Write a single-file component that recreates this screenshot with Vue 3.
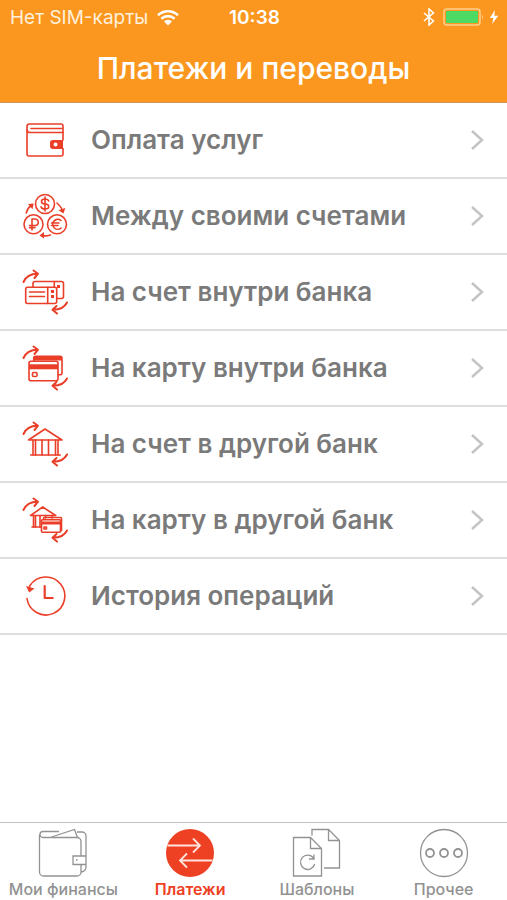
<template>
	<div class="screen">
		<header class="header">
			<div class="status">
				<div class="carrier">
					<span>Нет SIM-карты</span>
					<svg width="24" height="17" viewBox="0 0 24 17">
						<path d="M2 6.2a14.5 14.5 0 0 1 20 0M5.4 9.7a9.7 9.7 0 0 1 13.2 0" fill="none" stroke="#fff" stroke-width="2.6" />
						<path d="M8 12.4a5.8 5.8 0 0 1 8 0l-4 4z" fill="#fff" />
					</svg>
				</div>
				<time class="clock">10:38</time>
				<div class="power">
					<svg width="12" height="18" viewBox="0 0 12 18">
						<path d="M1 5l9.4 8L6 17V1l4.4 4L1 13" fill="none" stroke="#fff" stroke-width="1.6" />
					</svg>
					<svg width="42" height="18" viewBox="0 0 42 18">
						<rect x="1" y="1" width="36" height="16" rx="3" fill="none" stroke="#ffcf8f" stroke-width="1.5" />
						<rect x="3" y="3" width="32" height="12" rx="1" fill="#4cd964" />
						<path d="M39 6.500q2 2.500 0 5z" fill="#ffcf8f" />
					</svg>
					<svg width="10" height="16" viewBox="0 0 10 16">
						<path d="M6 1L.8 9H4.300L3.200 15 9.200 6.800H5.300z" fill="#fff" />
					</svg>
				</div>
			</div>
			<h1>Платежи и переводы</h1>
		</header>

		<main>
			<ul class="menu">
				<li v-for="item in items" :key="item.icon">
					<button class="item">
						<svg class="icon" viewBox="0 0 48 48">
							<g v-if="item.swap" class="swap">
								<path d="M2.500 14Q6 5.700 16.500 5.700M12.500 2.500L17 5.700 13.500 10" />
								<path d="M46 34.500Q42.500 41.700 32 41.700M35.500 38L31.500 41.700 36 45.500" />
							</g>

							<g v-if="item.icon === 'wallet'">
								<path d="M42 32.500V38a2 2 0 0 1-2 2H8a2 2 0 0 1-2-2V10.500A2.500 2.500 0 0 1 8.500 8H40a2 2 0 0 1 2 2v14" />
								<path d="M6 14Q6.500 16.500 9 16.500H42M10 12.500H41" />
								<path class="solid" fill-rule="evenodd" d="M32 24h10v9H32a3 3 0 0 1-3-3v-3a3 3 0 0 1 3-3zm2.500 2.500a2 2 0 1 0 .1 0z" />
							</g>

							<g v-else-if="item.icon === 'currency'">
								<circle cx="24" cy="12" r="9.500" />
								<circle cx="12.500" cy="32.300" r="9.500" />
								<circle cx="36" cy="32.300" r="9.500" />
								<path d="M27.700 9Q27 7 24 7q-3.500 0-3.500 2.500T24 12t3.700 2.500T24 17q-3.300 0-4-2.300M24 5v14" />
								<path d="M11 38V27h3a3.300 3.300 0 0 1 0 6.600H8.500M8.500 35.800H14" />
								<path d="M40 28.500a5 5 0 1 0 0 7.600M30.500 31H38M30.500 33.500H37" />
								<path d="M5.200 21Q6.500 16 10.500 13" />
								<path d="M36 11Q40 14.500 41.700 18.500" />
								<path d="M29.500 43Q25 44.500 21 43.500" />
								<path class="solid" d="M7 12l5.700-.5-1.200 5.700zM37.500 18.200l5 3.300 1.800-5.500zM23 40l-4.500 3.500 4.500 3z" />
							</g>

							<g v-else-if="item.icon === 'account'">
								<path d="M12 19v-3.500a2 2 0 0 1 2-2h26.500a2 2 0 0 1 2 2v13a2 2 0 0 1-2 2H36M33.300 13.500V19" />
								<rect x="4.700" y="19.300" width="31" height="16.200" rx="2" />
								<path d="M26.700 19.300v16.200M8.500 24h15M8.500 28.500h15" />
								<path class="solid" d="M30 22h3v3h-3zM30 27h3v3h-3zM36 17h3v3h-3z" />
							</g>

							<g v-else-if="item.icon === 'card'">
								<path d="M12.700 17v-2.700a2 2 0 0 1 2-2H39a2 2 0 0 1 2 2v14.400a2 2 0 0 1-2 2h-2" />
								<path class="solid" d="M13 13h28v3.500H13z" />
								<rect x="8" y="17.300" width="29" height="19.400" rx="2" />
								<path class="solid" d="M8 20.300h29v5H8z" />
								<rect x="11.500" y="28.500" width="4.500" height="4" rx="1" />
							</g>

							<g v-else-if="item.icon === 'bank'">
								<path d="M7.500 20L24 9l17 11zM9.700 35h29.600" />
								<path d="M12 20v15M14.500 20v15M21 20v15M27.500 20v15M34.500 20v15M37 20v15" />
							</g>

							<g v-else-if="item.icon === 'bank-card'">
								<path d="M9.500 19.500L21.700 11l13 8.500zM11 31h9" />
								<path d="M12.500 20v11M14.500 20v11M19 20v11M24.500 20v2M31 20v2" />
								<path d="M22.500 23.500v-1a1 1 0 0 1 1-1h16a1 1 0 0 1 1 1v12" />
								<rect x="20.500" y="23.700" width="19" height="12.600" rx="1" />
								<path class="solid" d="M20.500 25.500h19v3h-19z" />
								<rect x="23" y="31" width="2.500" height="2" />
							</g>

							<g v-else>
								<path d="M6 26.500a19 19 0 1 0 3-13L8 16" />
								<path d="M23.700 14v12h8" class="hand" />
								<path class="solid" d="M5 14l8.500 2.500L8.200 20.500z" />
							</g>
						</svg>
						<span class="label">{{ item.label }}</span>
						<svg class="chevron" viewBox="0 0 14 22">
							<path d="M2 2l10 9-10 9" />
						</svg>
					</button>
				</li>
			</ul>
		</main>

		<nav class="tabs">
			<button v-for="tab in tabs" :key="tab.icon" class="tab" :class="{ active: active === tab.icon }" @click="active = tab.icon">
				<svg viewBox="0 0 50 50">
					<g v-if="tab.icon === 'finance'">
						<path d="M1.500 6.500v37.500a4 4 0 0 0 4 4H39a4 4 0 0 0 4-4v-7.500M43 28V13.500a4 4 0 0 0-4-4H5a3 3 0 0 1 0-6H21M39 4h5a4 4 0 0 1 4 4v31a5 5 0 0 1-5 5" />
						<path d="M13.500 9L36.500 1.500l3 8M48 28H35v8.500h13M38 32h1.500" />
					</g>
					<g v-else-if="tab.icon === 'payments'">
						<circle class="disc" cx="25" cy="25" r="24" />
						<path class="arrows" d="M2.500 17.500H35M28 10.500l7 7-7 7M47.500 32.500H15M22 25.500l-7 7 7 7" />
					</g>
					<g v-else-if="tab.icon === 'templates'">
						<path d="M1.500 9.500H18.500L29.500 20.500v27.500h-28zM18.500 9.500v11h11" />
						<path d="M20 7.500V1.500H36.500L47.500 12.500V40H32M36.500 1.500v11h11" />
						<path d="M21.500 30a7.200 7.200 0 1 0 1.200 6M22 26.500v4.500h-5" />
					</g>
					<g v-else>
						<circle cx="25" cy="25" r="23.500" />
						<circle class="dot" cx="11" cy="25" r="4" />
						<circle class="dot" cx="25" cy="25" r="4" />
						<circle class="dot" cx="39" cy="25" r="4" />
					</g>
				</svg>
				<span>{{ tab.label }}</span>
			</button>
		</nav>
	</div>
</template>
<script setup>
import { ref } from 'vue'

const active = ref('payments');

const items = [
	{ icon: 'wallet', label: 'Оплата услуг' },
	{ icon: 'currency', label: 'Между своими счетами' },
	{ icon: 'account', label: 'На счет внутри банка', swap: true },
	{ icon: 'card', label: 'На карту внутри банка', swap: true },
	{ icon: 'bank', label: 'На счет в другой банк', swap: true },
	{ icon: 'bank-card', label: 'На карту в другой банк', swap: true },
	{ icon: 'history', label: 'История операций' }
];

const tabs = [
	{ icon: 'finance', label: 'Мои финансы' },
	{ icon: 'payments', label: 'Платежи' },
	{ icon: 'templates', label: 'Шаблоны' },
	{ icon: 'more', label: 'Прочее' }
];
</script>
<style>
body {
	margin: 0;
}
</style>
<style scoped>
.screen {
	display: flex;
	flex-direction: column;
	min-height: 100vh;
	background: #fff;
	font-family: Inter, "Noto Sans", sans-serif;
}

.header {
	background: #fb971e;
	border-bottom: 1px solid #c9985c;
	color: #fff;
}

.status {
	display: grid;
	grid-template-columns: 1fr auto 1fr;
	align-items: center;
	height: 34px;
	padding: 0 8px 0 10px;
	font-size: 19px;
}

.carrier {
	display: flex;
	align-items: center;
	gap: 8px;
	color: #fff0dc;
	white-space: nowrap;
}

.clock {
	font-weight: 600;
}

.power {
	display: flex;
	align-items: center;
	justify-content: flex-end;
	gap: 8px;
}

.power svg:last-child {
	margin-left: -4px;
}

h1 {
	margin: 0;
	height: 68px;
	line-height: 68px;
	text-align: center;
	font-size: 30px;
	font-weight: 500;
}

main {
	flex: 1;
}

.menu {
	margin: 0;
	padding: 0;
	list-style: none;
}

.menu li {
	border-bottom: 2px solid #dedede;
}

button {
	border: 0;
	background: none;
	font-family: inherit;
	cursor: pointer;
}

.item {
	display: flex;
	align-items: center;
	width: 100%;
	height: 74px;
	padding: 0 23px 0 21px;
	text-align: left;
}

.icon {
	flex: none;
	width: 48px;
	height: 48px;
	margin-right: 22px;
	fill: none;
	stroke: #ea3e28;
	stroke-width: 1.6;
	stroke-linecap: round;
	stroke-linejoin: round;
}

.icon .solid {
	fill: #ea3e28;
	stroke: none;
}

.icon .swap {
	stroke-width: 2;
}

.icon .hand {
	stroke-width: 2.2;
}

.label {
	flex: 1;
	padding-bottom: 2px;
	color: #7a7a7a;
	font-size: 26px;
	font-weight: 600;
}

.chevron {
	width: 14px;
	height: 22px;
	fill: none;
	stroke: #c4c4c6;
	stroke-width: 2.5;
}

.tabs {
	display: grid;
	grid-template-columns: repeat(4, 1fr);
	height: 77px;
	border-top: 1px solid #c2c2c2;
}

.tab {
	display: flex;
	flex-direction: column;
	align-items: center;
	gap: 1px;
	padding: 5px 0 0;
	color: #929292;
	font-size: 16px;
	font-weight: 500;
	white-space: nowrap;
}

.tab svg {
	width: 50px;
	height: 50px;
	fill: none;
	stroke: #929292;
	stroke-width: 1.3;
}

.tab .disc {
	fill: #ee4023;
	stroke: none;
}

.tab .dot {
	stroke-width: 1.8;
}

.tab .arrows {
	stroke: #ffe3dc;
	stroke-width: 1.8;
}

.tab.active {
	color: #ee4023;
	font-weight: 600;
}
</style>
